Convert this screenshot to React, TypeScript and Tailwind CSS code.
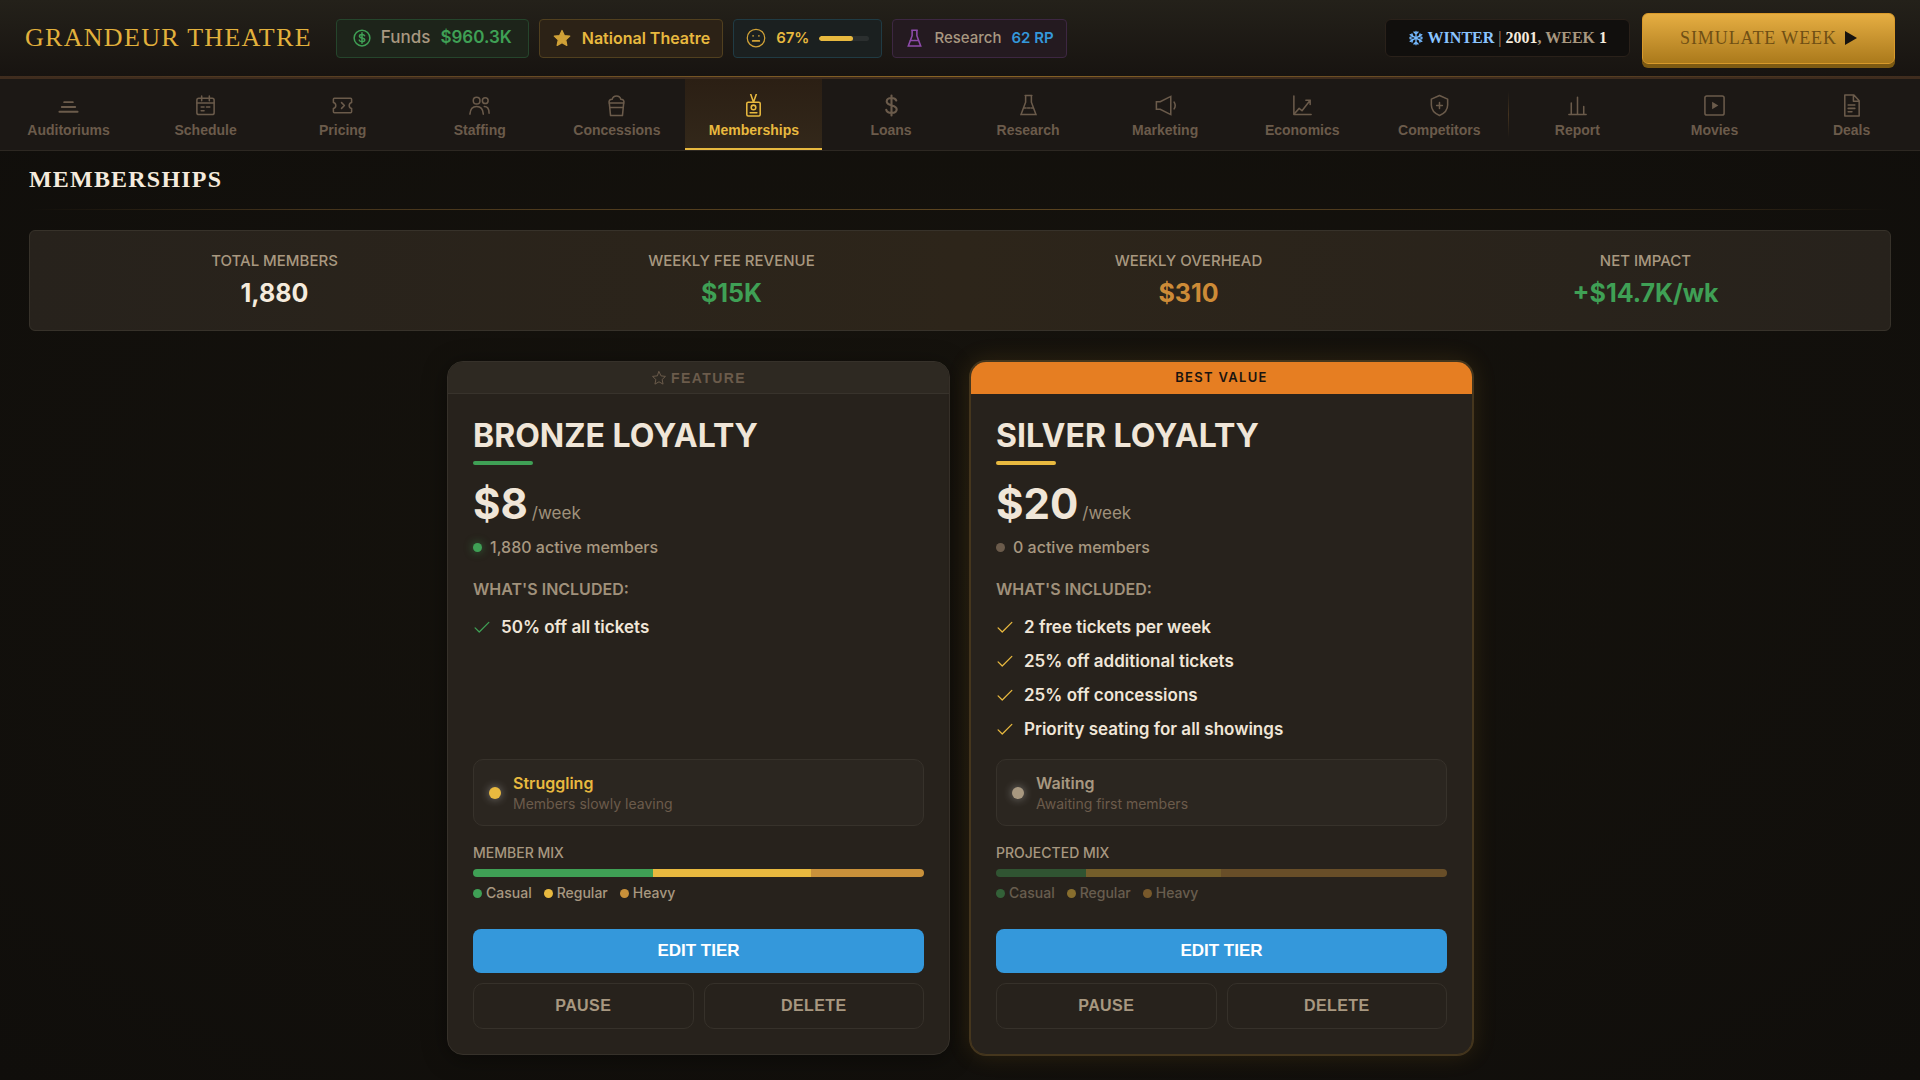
import React from 'react';

// ── Icons ──
const Svg: React.FC<{ className?: string; stroke?: number; children: React.ReactNode }> = ({
  className = 'h-6 w-6', stroke = 1.5, children,
}) => (
  <svg
    viewBox="0 0 24 24" className={className} fill="none" stroke="currentColor" strokeWidth={stroke}
    strokeLinecap="round" strokeLinejoin="round" aria-hidden="true"
  >
    {children}
  </svg>
);

const flask = (
  <>
    <path d="M8.5 1.5h7M9 1.5v7L4.2 21.5h15.6L15 8.5v-7" strokeLinejoin="miter" />
    <path d="M7 14.5h2.5M11 14.5h2.5M15 14.5h2" />
  </>
);

const ICONS: Record<string, React.ReactNode> = {
  auditoriums: <path d="M7.5 8.5h9M5 13.5h14M2.5 18.5h19" strokeWidth="2" />,
  schedule: (
    <>
      <rect x="3" y="4.5" width="18" height="17" rx="2" />
      <path d="M3 9.5h18M8 2v5M16 2v5M7.5 13.5h3M13 13.5h3.5M7.5 17.5h3" />
    </>
  ),
  pricing: (
    <>
      <path d="M3.5 4.5h17c.6 0 1 .4 1 1v3.3a3.3 3.3 0 0 0 0 6.4v3.3c0 .6-.4 1-1 1h-17c-.6 0-1-.4-1-1v-3.3a3.3 3.3 0 0 0 0-6.4V5.5c0-.6.4-1 1-1z" />
      <path d="M11 9l3 3-3 3" />
    </>
  ),
  staffing: (
    <>
      <circle cx="9" cy="7" r="3.5" />
      <path d="M2 21c.3-5.2 3.2-8 7-8s6.7 2.8 7 8" />
      <circle cx="18" cy="7" r="3" />
      <path d="M17 13c3.3 0 5 2.7 5 7" />
    </>
  ),
  concessions: (
    <>
      <path d="M4.5 9.5l1.3 13h12.4l1.3-13z" />
      <path d="M4.5 9.5c-1-2.3.7-4 3-4C8 3.3 10 2 12 2s4 1.3 4.5 3.5c2.3 0 4 1.700 3 4M5 14h14" />
    </>
  ),
  memberships: (
    <>
      <path d="M9 0l3 8.5L15 0" />
      <rect x="5" y="8.5" width="14" height="14.5" rx="1.5" />
      <circle cx="12" cy="14" r="2.4" />
      <path d="M8.5 19.5h7" />
    </>
  ),
  loans: <path d="M12 1.5v21M17 6.8C16.3 5 14.5 4.2 12 4.2c-2.9 0-5 1.3-5 3.7 0 5.4 10.4 2.6 10.4 8 0 2.5-2.3 3.9-5.4 3.9-2.9 0-5-1.1-5.5-3.4" strokeWidth="2.2" />,
  research: flask,
  marketing: (
    <>
      <path d="M2.5 8h4l11-5.5v19L6.5 16h-4z" strokeLinejoin="miter" />
      <path d="M21 8.5c1.3 2 1.3 5 0 7" />
    </>
  ),
  economics: (
    <>
      <path d="M3 2v19.5h18" />
      <path d="M3.5 20.5l5-5.5 3 2.5 8.5-11M15.5 6.5H20V11" />
    </>
  ),
  competitors: (
    <>
      <path d="M12 1.5l8.5 3.8v6.2c0 5-3.5 8.8-8.5 11-5-2.2-8.5-6-8.5-11V5.3z" />
      <path d="M12 9v6M9 12h6" />
    </>
  ),
  report: <path d="M3 21.5h18M5.5 21V9.5M12 21V3.5M18.5 21v-8" />,
  movies: (
    <>
      <rect x="2" y="2" width="20" height="20" rx="2" />
      <path d="M9.5 8v8l6.5-4z" fill="currentColor" stroke="none" />
    </>
  ),
  deals: (
    <>
      <path d="M5 1h9.5L20 7v16H5zM14 1v6.5h6" />
      <path d="M8.5 11.5h7M8.5 15h7M8.5 18.5h4" />
    </>
  ),
};

const Check: React.FC<{ className: string }> = ({ className }) => (
  <Svg className={`h-5 w-5 ${className}`}><path d="M2.5 13l5 5L19 6.5" /></Svg>
);

// ── Data ──
const NAV = [
  'Auditoriums', 'Schedule', 'Pricing', 'Staffing', 'Concessions', 'Memberships', 'Loans',
  'Research', 'Marketing', 'Economics', 'Competitors', 'Report', 'Movies', 'Deals',
];

const STATS = [
  { label: 'TOTAL MEMBERS', value: '1,880', color: 'text-[#f5ebdd]' },
  { label: 'WEEKLY FEE REVENUE', value: '$15K', color: 'text-[#3fa055]' },
  { label: 'WEEKLY OVERHEAD', value: '$310', color: 'text-[#cd8b37]' },
  { label: 'NET IMPACT', value: '+$14.7K/wk', color: 'text-[#3fa055]' },
];

interface Tier {
  name: string;
  price: string;
  members: string;
  featured: boolean;
  perks: string[];
  status: string;
  statusNote: string;
  mixLabel: string;
  mix: number[];
}

const TIERS: Tier[] = [
  {
    name: 'BRONZE LOYALTY', price: '$8', members: '1,880', featured: false,
    perks: ['50% off all tickets'],
    status: 'Struggling', statusNote: 'Members slowly leaving',
    mixLabel: 'MEMBER MIX', mix: [40, 35, 25],
  },
  {
    name: 'SILVER LOYALTY', price: '$20', members: '0', featured: true,
    perks: ['2 free tickets per week', '25% off additional tickets', '25% off concessions', 'Priority seating for all showings'],
    status: 'Waiting', statusNote: 'Awaiting first members',
    mixLabel: 'PROJECTED MIX', mix: [20, 30, 50],
  },
];

const MIX = [
  { label: 'Casual', color: 'bg-[#3fa055]' },
  { label: 'Regular', color: 'bg-[#e8b93f]' },
  { label: 'Heavy', color: 'bg-[#c9913a]' },
];

const SERIF = "font-['Liberation_Serif',serif]";
const ARIAL = "font-['Liberation_Sans',sans-serif]";

// ── Top bar ──
const TopBar: React.FC = () => (
  <header className="bg-linear-to-b from-[#24211a] to-[#171310]">
    <div className="flex h-[76px] items-center px-[25px]">
      <div className={`${SERIF} text-[26px] leading-8 tracking-wider whitespace-nowrap text-[#e2b13c]`}>GRANDEUR THEATRE</div>
      <div className="ml-6 flex gap-2.5">
        <div className="flex h-[39px] items-center gap-2.5 rounded border border-[#25452c] bg-[#1d241a] px-4 text-[17px]">
          <Svg className="h-[18px] w-[18px] text-[#3fa055]" stroke={2}>
            <circle cx="12" cy="12" r="10.5" />
            <path d="M12 5v14M15.5 9c-.5-1.2-1.7-1.7-3.5-1.7-2 0-3.4.8-3.4 2.3 0 3.3 7 1.6 7 4.9 0 1.6-1.5 2.3-3.6 2.3-2 0-3.3-.6-3.7-2" />
          </Svg>
          <span className="font-medium text-[#a89880]">Funds</span>
          <span className="font-semibold text-[#3fa055]">$960.3K</span>
        </div>
        <div className="flex h-[39px] items-center gap-2.5 rounded border border-[#51401f] bg-[#2c2216] px-3">
          <Svg className="h-5 w-5 text-[#d0a137]">
            <path d="M12 3l2.8 6 6.5.8-4.8 4.5 1.3 6.5-5.8-3.3-5.8 3.3 1.3-6.5L2.7 9.8 9.2 9z" fill="currentColor" />
          </Svg>
          <span className="text-base font-semibold text-[#e8b93f]">National Theatre</span>
        </div>
        <div className="flex h-[39px] items-center gap-2.5 rounded border border-[#203b44] bg-[#1b2020] px-3">
          <Svg className="h-5 w-5 text-[#d0a137]">
            <circle cx="12" cy="12" r="10.5" />
            <path d="M8 15.5h8M8.5 9.5v.1M15.5 9.5v.1" strokeWidth="2" />
          </Svg>
          <span className="text-[15px] font-semibold text-[#e8b93f]">67%</span>
          <div className="h-[5px] w-[50px] overflow-hidden rounded-full bg-[#2b2f2f]">
            <div className="h-full rounded-full bg-[#e8b93f]" style={{ width: '67%' }} />
          </div>
        </div>
        <div className="flex h-[39px] items-center gap-2.5 rounded border border-[#3d2742] bg-[#241a20] px-3 text-[15px]">
          <Svg className="h-[19px] w-[19px] text-[#8e4bab]" stroke={2}>{flask}</Svg>
          <span className="font-medium text-[#a89880]">Research</span>
          <span className="font-semibold text-[#3498db]">62 RP</span>
        </div>
      </div>
      <div className={`${SERIF} ml-auto flex h-[38px] items-center gap-1 rounded-md border border-[#2a211a] bg-[#110f0d] px-[22px] text-base font-bold text-[#f5ebdd]`}>
        <Svg className="h-4 w-4 text-[#74b9ff]" stroke={2}>
          <path d="M12 2v20M3.3 7l17.4 10M20.7 7L3.3 17M9 3l3 3 3-3M9 21l3-3 3 3M3 11l4-1-1-4M21 13l-4 1 1 4M3 13l4 1-1 4M21 11l-4-1 1-4" />
        </Svg>
        <span className="whitespace-pre">
          <span className="text-[#8ac4ff]">WINTER</span>
          <span className="font-normal text-[#a89880]"> | </span>2001
          <span className="text-[#a89880]">, WEEK </span>1
        </span>
      </div>
      <button
        type="button"
        className={`${SERIF} ml-3 flex h-[51px] w-[253px] items-center justify-center gap-2 rounded-md border border-[#d99a2a] bg-linear-to-b from-[#e6ae42] to-[#ab7a1b] text-lg tracking-wider text-[#6f4f14] shadow-[0_4px_0_#7d5a12]`}
      >
        SIMULATE WEEK
        <svg viewBox="0 0 12 14" className="h-3.5 w-3" aria-hidden="true"><path d="M0 0l12 7-12 7z" fill="#17130f" /></svg>
      </button>
    </div>
    <div className="h-px bg-linear-to-r from-[#3f2c1e] via-[#8a6424] to-[#3f2c1e]" />
    <div className="h-0.5 bg-[#3f2c1e]" />
  </header>
);

// ── Navigation ──
const Nav: React.FC = () => (
  <nav className="flex border-b border-[#2d2822] bg-[#1c1815]">
    {NAV.map((name) => {
      const active = name === 'Memberships';
      return (
        <React.Fragment key={name}>
          {name === 'Report' && <div className="my-3 w-px bg-linear-to-b from-transparent via-[#44331f] to-transparent" />}
          <a
            href={`#${name.toLowerCase()}`}
            className={`${ARIAL} flex h-[71px] min-w-0 flex-1 flex-col items-center border-b-2 pt-[15px] text-sm leading-[18px] font-bold ${
              active
                ? 'border-[#e8b93f] bg-linear-to-b from-[#2b1f14] to-[#33281a] text-[#e8b93f]'
                : 'border-transparent text-[#6b5b4b]'
            }`}
          >
            <Svg className="mb-1 h-[23px] w-[23px]" stroke={1.6}>{ICONS[name.toLowerCase()]}</Svg>
            {name}
          </a>
        </React.Fragment>
      );
    })}
  </nav>
);

// ── Tier card ──
const TierCard: React.FC<{ tier: Tier }> = ({ tier }) => {
  const { featured } = tier;
  return (
    <article
      className={`flex flex-col overflow-hidden rounded-2xl border bg-[#27221c] ${
        featured
          ? 'border-[#45361d] shadow-[0_0_0_1px_#45361d,0_0_24px_rgba(200,145,40,0.16)]'
          : 'border-[#36312a] shadow-[0_4px_24px_rgba(0,0,0,0.4)]'
      }`}
    >
      {featured ? (
        <div className="flex h-8 items-center justify-center bg-[#e67e22] text-[13px] font-semibold tracking-widest text-[#1a1410]">
          BEST VALUE
        </div>
      ) : (
        <button
          type="button"
          className={`${ARIAL} flex h-8 items-center justify-center gap-1 border-b border-[#38332c] bg-[#2e2922] text-sm font-bold tracking-widest text-[#6b5b4b]`}
        >
          <Svg className="h-4 w-4">
            <path d="M12 2.5l3 6.3 6.7.8-5 4.7 1.4 6.9-6.1-3.5-6.1 3.5 1.4-6.9-5-4.7 6.7-.8z" />
          </Svg>
          FEATURE
        </button>
      )}

      <div className="flex flex-1 flex-col px-[25px] pt-6 pb-[25px]">
        <h2 className="text-[32px] leading-9 font-bold text-[#f0e6d8]">{tier.name}</h2>
        <div className={`mt-[7px] h-1 w-[60px] rounded-full ${featured ? 'bg-[#e8b93f]' : 'bg-[#3fa055]'}`} />

        <div className="mt-4 flex items-baseline gap-1">
          <span className="text-[42px] leading-[46px] font-bold text-[#f0e6d8]">{tier.price}</span>
          <span className="text-[17px] leading-6 text-[#a0917b]">/week</span>
        </div>
        <div className="mt-2 flex items-center gap-2 text-base leading-6 font-medium text-[#a89880]">
          <span className={`h-[9px] w-[9px] rounded-full ${featured ? 'bg-[#6b5b4b]' : 'bg-[#3fa055] shadow-[0_0_8px_rgba(63,160,85,0.6)]'}`} />
          {tier.members} active members
        </div>

        <h3 className="mt-5 text-base leading-5 font-semibold text-[#a0917b]">WHAT'S INCLUDED:</h3>
        <ul className="mt-4 mb-[18px] flex flex-1 flex-col gap-2.5">
          {tier.perks.map((perk) => (
            <li key={perk} className="flex items-center gap-2 text-[17px] leading-6 font-semibold text-[#f0e6d8]">
              <Check className={featured ? 'text-[#e8b93f]' : 'text-[#3fa055]'} />
              {perk}
            </li>
          ))}
        </ul>

        {/* Status */}
        <div className="flex items-center gap-3 rounded-[10px] border border-[#37322b] bg-[#2b2620] px-[15px] py-3">
          <span className={`h-3 w-3 rounded-full shadow-[0_0_10px_rgba(255,255,255,0.4)] ${featured ? 'bg-[#a89880]' : 'bg-[#e8b93f]'}`} />
          <div>
            <div className={`text-base leading-[22px] font-semibold ${featured ? 'text-[#a89880]' : 'text-[#e8b93f]'}`}>{tier.status}</div>
            <div className="text-sm leading-[19px] text-[#6b5b4b]">{tier.statusNote}</div>
          </div>
        </div>

        {/* Member mix */}
        <div className="mt-4 text-sm leading-[22px] font-medium text-[#a89880]">{tier.mixLabel}</div>
        <div className={`mt-[5px] flex h-2 overflow-hidden rounded ${featured ? 'opacity-40' : ''}`}>
          {MIX.map((m, i) => (
            <div key={m.label} className={m.color} style={{ width: `${tier.mix[i]}%` }} />
          ))}
        </div>
        <div className={`mt-1.5 flex gap-3 text-sm leading-5 font-medium text-[#a89880] ${featured ? 'opacity-50' : ''}`}>
          {MIX.map((m) => (
            <span key={m.label} className="flex items-center gap-1">
              <span className={`h-[9px] w-[9px] rounded-full ${m.color}`} />
              {m.label}
            </span>
          ))}
        </div>

        {/* Actions */}
        <button type="button" className={`${ARIAL} mt-[26px] h-11 rounded-lg bg-[#3498db] text-[17px] font-bold text-white`}>
          EDIT TIER
        </button>
        <div className={`${ARIAL} mt-2.5 grid grid-cols-2 gap-2.5 text-base font-bold tracking-wide text-[#a89880]`}>
          <button type="button" className="h-[46px] rounded-[10px] border border-[#36312a]">PAUSE</button>
          <button type="button" className="h-[46px] rounded-[10px] border border-[#36312a]">DELETE</button>
        </div>
      </div>
    </article>
  );
};

export default function App() {
  return (
    <div className="min-h-screen bg-[#12100c] bg-radial from-[#16130d] to-[#100e0b] pb-6 font-['Inter',sans-serif]">
      <TopBar />
      <Nav />
      <main className="px-[29px] pt-3">
        <h1 className={`${SERIF} text-2xl leading-8 font-bold tracking-wider text-[#f5ebdd]`}>MEMBERSHIPS</h1>
        <div className="mt-3.5 h-px bg-[linear-gradient(90deg,transparent,#45341c_15%,#5c4520_50%,#45341c_85%,transparent)]" />

        <section className="mt-5 grid grid-cols-4 rounded-md border border-[#37322a] bg-linear-to-r from-[#27221c] via-[#2d251a] to-[#27221c] px-4 pt-[19px] pb-5 text-center">
          {STATS.map((s) => (
            <div key={s.label}>
              <div className="text-[15px] leading-[22px] font-medium text-[#a89880]">{s.label}</div>
              <div className={`mt-1 text-[25px] leading-[34px] font-bold ${s.color}`}>{s.value}</div>
            </div>
          ))}
        </section>

        <section className="mx-auto mt-[30px] grid max-w-[1026px] grid-cols-2 gap-5">
          {TIERS.map((tier) => (
            <TierCard key={tier.name} tier={tier} />
          ))}
        </section>
      </main>
    </div>
  );
}
